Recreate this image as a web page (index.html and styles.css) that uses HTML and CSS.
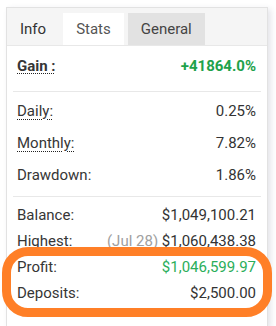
FILE: index.html
```html
<!DOCTYPE html>
<html lang="en">
  <head>
    <meta charset="UTF-8" />
    <meta name="viewport" content="width=device-width, initial-scale=1.0" />
    <title>Account Stats</title>

    <link rel="stylesheet" href="styles.css">
  </head>
  <body>
    <div class="card">
      <div class="tabs">
        <div class="tab">Info</div>
        <div class="tab active">Stats</div>
        <div class="tab muted">General</div>
      </div>

      <div class="group gain-group">
        <div class="row">
          <span class="label hint bold">Gain :</span>
          <span class="value gain">+41864.0%</span>
        </div>
      </div>

      <div class="group">
        <div class="row">
          <span class="label hint">Daily:</span>
          <span class="value">0.25%</span>
        </div>
        <div class="row">
          <span class="label hint">Monthly:</span>
          <span class="value">7.82%</span>
        </div>
        <div class="row">
          <span class="label">Drawdown:</span>
          <span class="value">1.86%</span>
        </div>
      </div>

      <div class="group money">
        <div class="row">
          <span class="label">Balance:</span>
          <span class="value">$1,049,100.21</span>
        </div>
        <div class="row">
          <span class="label">Highest:</span>
          <span class="value"><span class="date">(Jul 28)</span> $1,060,438.38</span>
        </div>
        <div class="row">
          <span class="label">Profit:</span>
          <span class="value profit">$1,046,599.97</span>
        </div>
        <div class="row">
          <span class="label">Deposits:</span>
          <span class="value">$2,500.00</span>
        </div>
      </div>
    </div>

    <!-- highlight drawn over the card -->
    <div class="highlight"></div>
  </body>
</html>
```

FILE: styles.css
```css
html {
  overflow: hidden;
}

body {
  margin: 0;
  padding: 7px 0 0 6px;
  background: #fff;
  font-family: Roboto, "Liberation Sans", sans-serif;
  font-size: 15px;
  line-height: 20px;
  color: #363636;
}

.card {
  width: 260px;
  height: 318px;
  border: 1px solid #e2e2e2;
  background: #fff;
  box-shadow: 3px 2px 6px rgba(40, 40, 80, 0.12);
}

.tabs {
  display: flex;
  gap: 4px;
  height: 32px;
  padding-top: 5px;
  background: #f5f5f5;
  border-bottom: 1px solid #e8e8e8;
}

.tab {
  padding: 0 13px;
  line-height: 32px;
  color: #333;
}

.tab.active {
  background: #fff;
  color: #555;
}

.tab.muted {
  background: #e2e2e2;
  color: #444;
}

.group {
  margin: 0 6px;
  padding: 3px 0 5px;
  border-bottom: 1px solid #e8e8e8;
}

.gain-group {
  padding: 10px 0 15px;
}

.money {
  border-bottom: none;
  padding-top: 5px;
}

.row {
  display: flex;
  justify-content: space-between;
  padding: 6px 5px 6px 4px;
}

.gain-group .row {
  padding-top: 0;
  padding-bottom: 0;
}

.money .row {
  padding: 3px 5px 3px 4px;
}

.hint {
  text-decoration: underline dotted #222;
  text-decoration-thickness: 1px;
  text-underline-offset: 3px;
}

.bold {
  font-weight: bold;
  text-underline-offset: 2px;
}

.value {
  color: #333;
}

.gain {
  font-weight: bold;
  color: #1ea24b;
}

.profit {
  color: #2aae5a;
}

.date {
  color: #a0a0a0;
}

.highlight {
  position: absolute;
  left: 2px;
  top: 247px;
  width: 252px;
  height: 52px;
  border: 9px solid #ff7f27;
  border-radius: 26px;
}
```
